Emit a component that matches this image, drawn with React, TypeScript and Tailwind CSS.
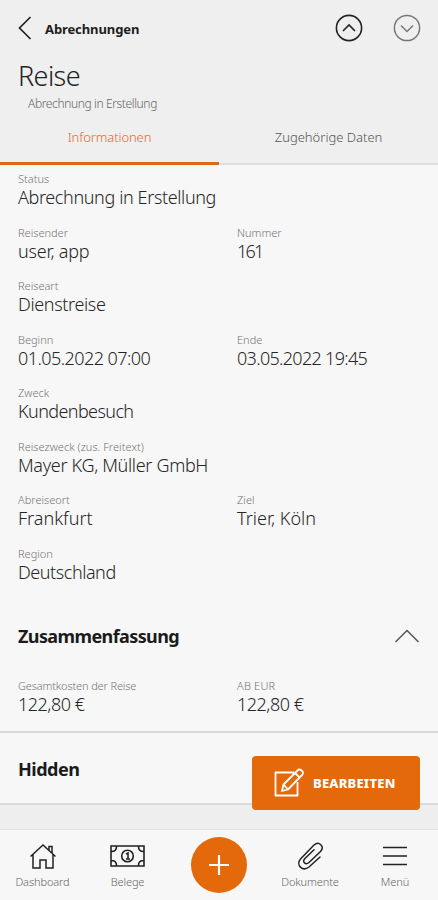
import type { ReactNode } from 'react';
import clsx from 'clsx';

type FieldData = { label: string; value: string; labelClass?: string; valueClass?: string };

const rows: FieldData[][] = [
  [{ label: 'Status', value: 'Abrechnung in Erstellung', valueClass: 'tracking-[-0.38px]' }],
  [{ label: 'Reisender', value: 'user, app', valueClass: 'tracking-[-0.22px]' }, { label: 'Nummer', value: '161', valueClass: 'tracking-[-1.8px]' }],
  [{ label: 'Reiseart', value: 'Dienstreise', valueClass: 'tracking-[-0.36px]' }],
  [{ label: 'Beginn', value: '01.05.2022 07:00', valueClass: 'tracking-[-0.56px]' }, { label: 'Ende', value: '03.05.2022 19:45', valueClass: 'tracking-[-0.69px]' }],
  [{ label: 'Zweck', value: 'Kundenbesuch', valueClass: 'tracking-[-0.6px]' }],
  [{ label: 'Reisezweck (zus. Freitext)', value: 'Mayer KG, Müller GmbH', labelClass: 'tracking-[0.04px]', valueClass: 'tracking-[-0.33px]' }],
  [{ label: 'Abreiseort', value: 'Frankfurt' }, { label: 'Ziel', value: 'Trier, Köln' }],
  [{ label: 'Region', value: 'Deutschland', valueClass: 'tracking-[-0.45px]' }],
];

const totals: FieldData[] = [
  { label: 'Gesamtkosten der Reise', value: '122,80 €', labelClass: 'tracking-[-0.14px]', valueClass: 'tracking-[-0.5px]' },
  { label: 'AB EUR', value: '122,80 €', labelClass: 'tracking-[0.2px]', valueClass: 'tracking-[-0.5px]' },
];

function Field({ label, value, labelClass, valueClass }: FieldData) {
  return (
    <div className="whitespace-nowrap pl-[18px]">
      <div className="h-[15px] text-[11px] leading-[15px] text-[#757575]"><span className={labelClass}>{label}</span></div>
      <div className="h-[22px] text-[18px] leading-[22px] text-[#262626]"><span className={valueClass}>{value}</span></div>
    </div>
  );
}

function FieldRow({ fields }: { fields: FieldData[] }) {
  return (
    <div className="grid h-[53.5px] grid-cols-2">
      {fields.map((field) => <Field key={field.label} {...field} />)}
    </div>
  );
}

function NavItem({ label, className, children }: { label: string; className?: string; children: ReactNode }) {
  return (
    <div className={clsx('flex flex-col items-center whitespace-nowrap pt-3 text-[#222]', className)}>
      <div className="flex h-7 items-center">{children}</div>
      <span className="mt-[3px] text-[11px] leading-[18px] tracking-[-0.1px] text-[#666]">{label}</span>
    </div>
  );
}

export default function App() {
  return (
    <div className="relative flex h-[900px] w-[438px] flex-col overflow-hidden bg-[#f7f7f7] font-['Noto_Sans','Open_Sans',sans-serif] font-light">
      <header className="h-[165px] shrink-0 bg-[#efefef]">
        <div className="flex h-14 items-center pl-[18px] pr-[17px]">
          <svg className="h-6 w-[14px]" viewBox="0 0 14 24" fill="none" stroke="#222" strokeWidth="1.7"><path d="M12.5 1 1.5 12l11 11" /></svg>
          <span className="ml-[13px] pt-px text-[13px] font-bold leading-5 tracking-[-0.1px] text-[#1d1d1d]">Abrechnungen</span>
          <div className="ml-auto flex gap-[30px]">
            <svg className="size-7" viewBox="0 0 28 28" fill="none" stroke="#222" strokeWidth="1.6"><circle cx="14" cy="14" r="12.6" /><path d="m8 17 6-6 6 6" /></svg>
            <svg className="size-7" viewBox="0 0 28 28" fill="none" stroke="#777" strokeWidth="1.5"><circle cx="14" cy="14" r="12.6" /><path d="m8 11.5 6 6 6-6" /></svg>
          </div>
        </div>
        <h1 className="h-9 pl-[18px] text-[27px] leading-[39px] tracking-[-0.6px] text-[#222]">Reise</h1>
        <p className="h-[22px] pl-7 text-[12px] leading-[23px] tracking-[-0.38px] text-[#666]">Abrechnung in Erstellung</p>
        <div className="grid h-[51px] grid-cols-2 text-center text-[13px] leading-[46px]">
          <div className="border-b-[3px] border-[#df6818] tracking-[-0.1px] text-[#e06a33]">Informationen</div>
          <div className="border-b-2 border-[#dfdfdf] text-[#555]">Zugehörige Daten</div>
        </div>
      </header>

      <main className="pt-[6px]">
        {rows.map((fields) => <FieldRow key={fields[0].label} fields={fields} />)}
        <section className="h-[134px] border-b-2 border-[#dadada]">
          <div className="flex h-[79px] items-center justify-between pb-[5px] pl-[18px] pr-[18px]">
            <h2 className="text-[18px] font-bold tracking-[-0.6px] text-[#1b1b1b]">Zusammenfassung</h2>
            <svg className="h-[14px] w-[26px]" viewBox="0 0 26 14" fill="none" stroke="#555" strokeWidth="1.5"><path d="M1.5 13 13 1.5 24.5 13" /></svg>
          </div>
          <FieldRow fields={totals} />
        </section>
        <section className="flex h-[72px] items-center border-b-2 border-[#dadada] pl-[18px] pt-[2px]">
          <h2 className="text-[18px] font-bold tracking-[-0.5px] text-[#1b1b1b]">Hidden</h2>
        </section>
        <div className="h-10 bg-[#eeeeee]" />
      </main>

      <button className="absolute bottom-[90px] right-[18px] flex h-[54px] w-[168px] items-center rounded bg-[#e3690b] pl-[21px] text-white">
        <svg className="size-8" viewBox="0 0 32 32" fill="none" stroke="white" strokeWidth="1.8" strokeLinejoin="round">
          <path d="M21 5.5H2.5v23h22V15" />
          <path d="m9 24 1.5-6.5L24.5 3.5q2-2 4.300.2t.2 4.300L15 22.500Zm1.500-6.500 4.500 5M22 6l5 4.800" />
        </svg>
        <span className="ml-2 pt-[2px] text-[13px] font-extrabold tracking-[0.2px]">BEARBEITEN</span>
      </button>

      <nav className="absolute inset-x-0 bottom-0 flex h-[71px] border-t border-[#e2e2e2] bg-[#f7f7f7]">
        <NavItem label="Dashboard" className="w-[85px]">
          <svg className="h-[27px] w-7" viewBox="0 0 28 27" fill="none" stroke="currentColor" strokeWidth="1.5"><path d="M1.5 13.5 14 2l12.5 11.5M4 11.5V25h7v-8h6v8h7V11.5M20 7V3.5h3V10" /></svg>
        </NavItem>
        <NavItem label="Belege" className="w-[85px]">
          <svg className="h-[22px] w-[35px]" viewBox="0 0 35 22" fill="none" stroke="currentColor" strokeWidth="1.6">
            <path d="M1 1h33v20H1ZM1.500 6.500q5 0 5-5M1.500 15.500q5 0 5 5M33.500 6.500q-5 0-5-5M33.500 15.500q-5 0-5 5" />
            <circle cx="17.500" cy="11" r="5.800" /><path d="m16 9 2-1v6M16 14h4" />
          </svg>
        </NavItem>
        <div className="flex w-[98px] justify-center pt-[7px]">
          <div className="flex size-14 items-center justify-center rounded-full bg-[#e3690b]">
            <svg className="size-[22px]" viewBox="0 0 22 22" stroke="white" strokeWidth="2.2"><path d="M11 1v20M1 11h20" /></svg>
          </div>
        </div>
        <NavItem label="Dokumente" className="w-[84px]">
          <svg className="size-7" viewBox="0 0 28 28" fill="none" stroke="currentColor" strokeWidth="1.5" strokeLinecap="round">
            <path d="M24 15 13 25C6.500 30-.5 23 4.500 17L18 3c5-4.500 11 1.500 6.500 6.500L13 20.500c-3.500 3-7-.8-4.300-3.800L18 7.800" />
          </svg>
        </NavItem>
        <NavItem label="Menü" className="w-[86px]">
          <svg className="h-[22px] w-6" viewBox="0 0 24 22" stroke="currentColor" strokeWidth="1.700"><path d="M0 2.500h24M0 11h24M0 19.500h24" /></svg>
        </NavItem>
      </nav>
    </div>
  );
}
